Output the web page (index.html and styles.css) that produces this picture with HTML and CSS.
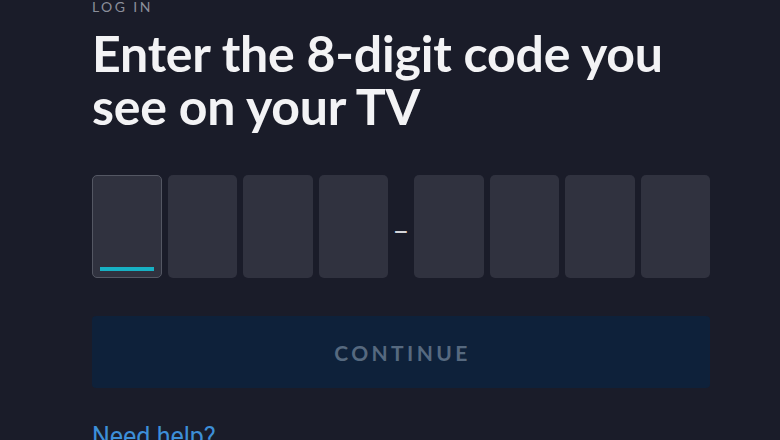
FILE: index.html
```html
<!DOCTYPE html>
<html lang="en">
<head>
<meta charset="utf-8">
<title>Log in</title>
<link rel="stylesheet" href="styles.css">
</head>
<body>
<main class="page">
  <div class="eyebrow">LOG IN</div>
  <h1 class="title">Enter the 8-digit code you see on your TV</h1>
  <div class="code-row">
    <div class="group">
      <div class="cell cell-active"><span class="caret"></span></div>
      <div class="cell"></div>
      <div class="cell"></div>
      <div class="cell"></div>
    </div>
    <div class="sep">–</div>
    <div class="group">
      <div class="cell"></div>
      <div class="cell"></div>
      <div class="cell"></div>
      <div class="cell"></div>
    </div>
  </div>
  <button class="continue" type="button">CONTINUE</button>
  <a class="help" href="#">Need help?</a>
</main>
</body>
</html>
```

FILE: styles.css
```css
html, body {
  margin: 0;
  padding: 0;
  background: #1a1c29;
  height: 100%;
  overflow: hidden;
}

.page {
  width: 618px;
  padding-left: 92px;
  font-family: "Lato", "Noto Sans", sans-serif;
  color: #f4f4f6;
}

.eyebrow {
  font-size: 14px;
  line-height: 14px;
  letter-spacing: 2.4px;
  color: #8b8e9a;
  font-weight: 400;
}

.title {
  margin: 13px 0 0;
  font-size: 50px;
  line-height: 53px;
  font-weight: 700;
  color: #f3f3f5;
  letter-spacing: -0.2px;
  width: 610px;
}

.code-row {
  display: flex;
  margin-top: 42px;
  height: 103px;
}

.group {
  flex: 1;
  display: flex;
  gap: 6px;
}

.cell {
  flex: 1;
  background: #30323f;
  border-radius: 5px;
  border: 1px solid transparent;
  box-sizing: border-box;
  display: flex;
  align-items: flex-end;
  padding: 0 7px 6px;
}

.cell-active {
  border-color: #545763;
}

.caret {
  display: block;
  width: 100%;
  height: 4px;
  background: #17b1c4;
}

.sep {
  width: 26px;
  display: flex;
  align-items: center;
  justify-content: center;
  font-size: 29px;
  color: #d4d5d9;
  padding-top: 5px;
  box-sizing: border-box;
}

.continue {
  display: block;
  width: 100%;
  height: 72px;
  margin-top: 38px;
  border: none;
  border-radius: 4px;
  background: #0e213a;
  color: #56697f;
  font-family: "Lato", "Noto Sans", sans-serif;
  font-size: 21px;
  font-weight: 700;
  letter-spacing: 3.4px;
  padding: 0 0 0 3px;
}

.help {
  display: block;
  margin-top: 37px;
  font-family: "Roboto", sans-serif;
  font-size: 25px;
  line-height: 24px;
  color: #3d8fd8;
  text-decoration: none;
}
```
